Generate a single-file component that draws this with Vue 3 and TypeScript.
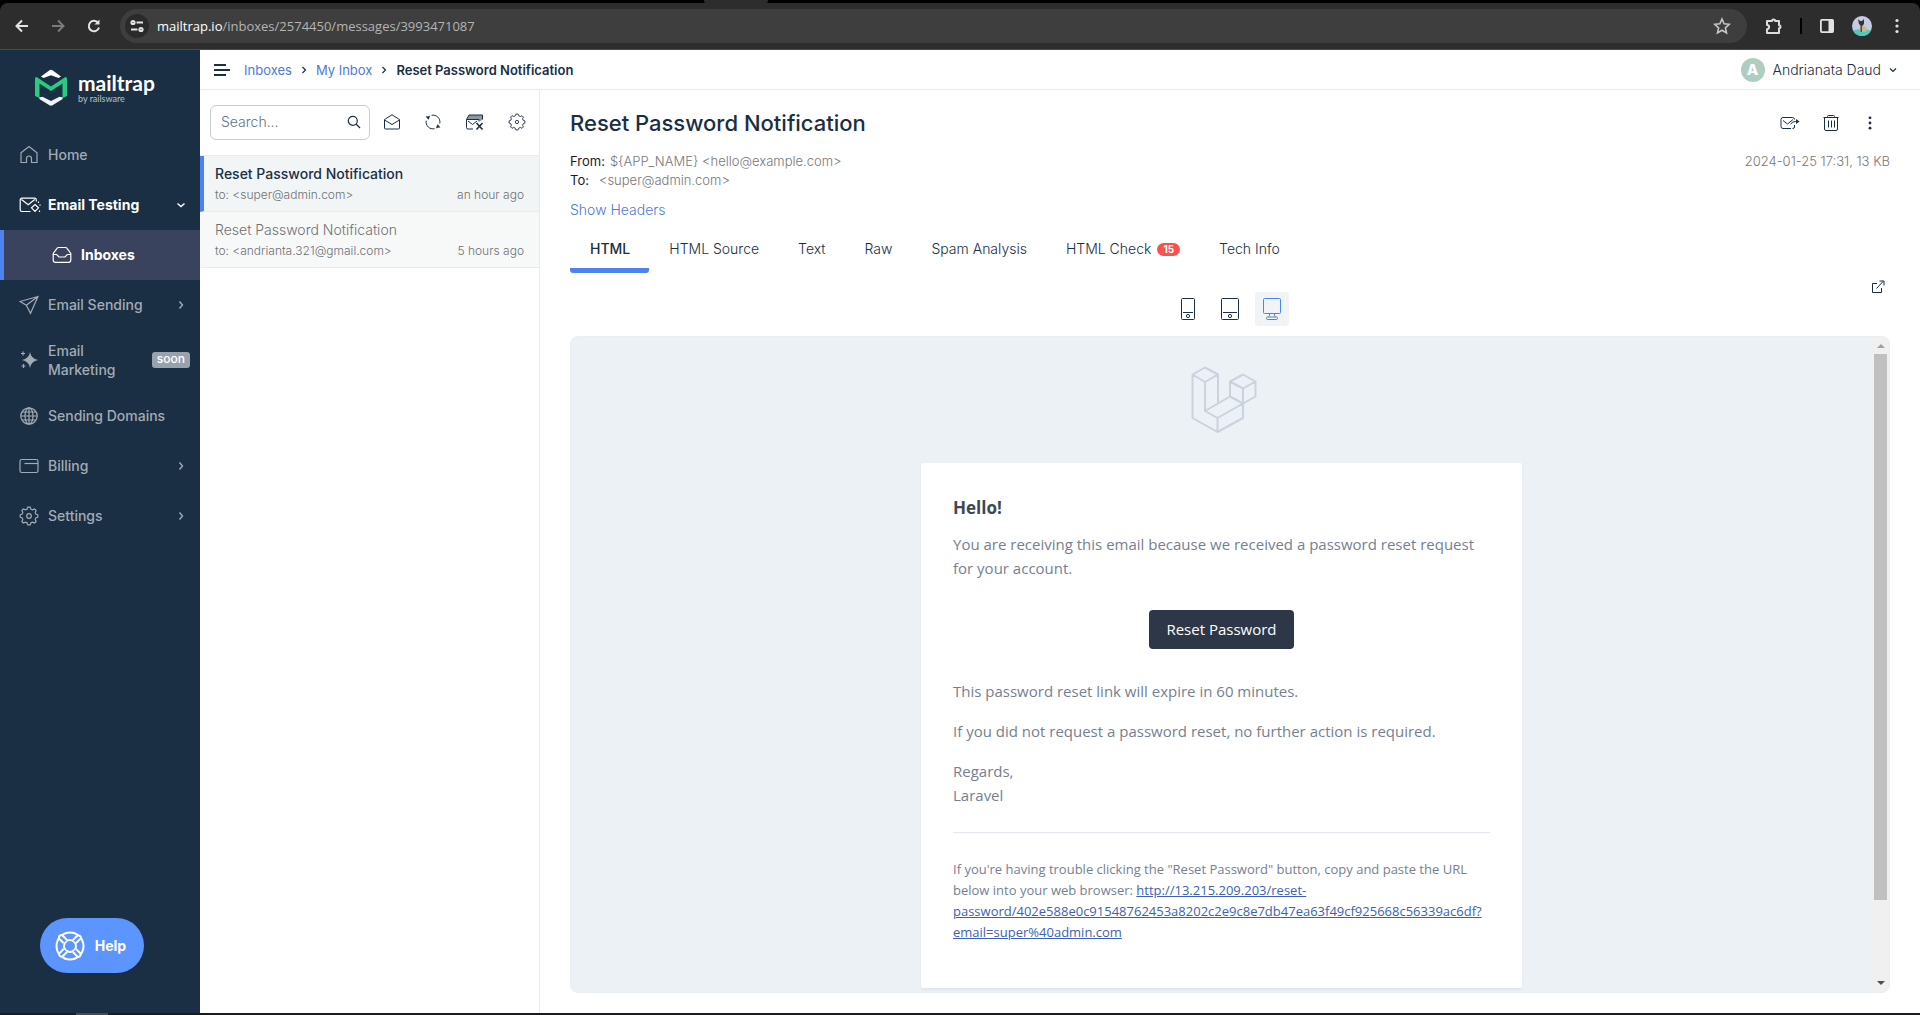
<script setup lang="ts">
import { ref } from 'vue'

interface Message {
  id: number
  subject: string
  to: string
  age: string
}

interface Tab {
  name: string
  badge?: number
}

const messages: Message[] = [
  { id: 3993471087, subject: 'Reset Password Notification', to: '<super@admin.com>', age: 'an hour ago' },
  { id: 3992760412, subject: 'Reset Password Notification', to: '<andrianta.321@gmail.com>', age: '5 hours ago' },
]

const tabs: Tab[] = [
  { name: 'HTML' },
  { name: 'HTML Source' },
  { name: 'Text' },
  { name: 'Raw' },
  { name: 'Spam Analysis' },
  { name: 'HTML Check', badge: 15 },
  { name: 'Tech Info' },
]

const selectedMessage = ref(3993471087)
const activeTab = ref('HTML')
const device = ref('desktop')
const search = ref('')
const appName = '${APP_NAME} <hello@example.com>'
</script>

<template>
  <div class="window">
    <header class="browser">
      <div class="tabstrip"><span class="tab-foot"></span></div>
      <div class="toolbar">
        <div class="nav-buttons">
          <button aria-label="Back">
            <svg width="16" height="16" viewBox="0 0 16 16" fill="none" stroke="#e3e3e3" stroke-width="2"><path d="M14 8H3M8 2.5 2.5 8 8 13.5" /></svg>
          </button>
          <button aria-label="Forward">
            <svg width="16" height="16" viewBox="0 0 16 16" fill="none" stroke="#7b7b7b" stroke-width="2"><path d="M2 8h11M8 2.5 13.5 8 8 13.5" /></svg>
          </button>
          <button aria-label="Reload">
            <svg width="16" height="16" viewBox="0 0 16 16" fill="none" stroke="#e3e3e3" stroke-width="2"><path d="M13 9.5A5.2 5.2 0 1 1 12.2 5" /><path d="M13.5 1.5v5h-5z" fill="#e3e3e3" stroke="none" /></svg>
          </button>
        </div>
        <div class="address">
          <span class="site-info">
            <svg width="14" height="14" viewBox="0 0 14 14" fill="none" stroke="#e3e3e3" stroke-width="2"><circle cx="3" cy="3.5" r="1.6" /><path d="M6.5 3.5H13M1 10.5h6.5" /><circle cx="11" cy="10.5" r="1.6" /></svg>
          </span>
          <span class="url"><b>mailtrap.io</b>/inboxes/2574450/messages/3993471087</span>
          <svg class="star" width="18" height="18" viewBox="0 0 18 18" fill="none" stroke="#c7c7c7" stroke-width="1.6"><path d="m9 2 2.1 4.8 5.2.5-3.9 3.5 1.1 5.1L9 13.200l-4.500 2.700 1.100-5.100L1.700 7.300l5.200-.5z" /></svg>
        </div>
        <div class="extensions">
          <svg width="18" height="18" viewBox="0 0 18 18" fill="none" stroke="#dcdcdc" stroke-width="2"><path d="M2 4h5a1.600 1.600 0 0 1 3.200 0H14v4.200a1.500 1.500 0 0 1 0 3V16H2v-3.800a2.100 2.100 0 0 0 0-4.200z" stroke-linejoin="round" /></svg>
          <span class="divider"></span>
          <svg width="16" height="16" viewBox="0 0 16 16"><rect x="1.900" y="1.900" width="12.200" height="12.200" rx="1" fill="none" stroke="#e3e3e3" stroke-width="1.800" /><path d="M9.500 1.500H14v13H9.500z" fill="#e3e3e3" /></svg>
          <svg class="profile" width="20" height="20" viewBox="0 0 20 20"><circle cx="10" cy="10" r="10" fill="#c3cbe6" /><path d="M1 14.500q9-3 18 0A10 10 0 0 1 1 14.500z" fill="#4fc9bd" /><path d="M8 9h3l4 3.500-1 3.500H8z" fill="#c9b58c" /><path d="M6 3l2 2h2l2-2v5L9.500 10.500 7 8z" fill="#3d3030" /><path d="M8.500 9.500h1.500V16H8.500z" fill="#5a4a3c" /></svg>
          <svg width="4" height="16" viewBox="0 0 4 16" fill="#e3e3e3"><circle cx="2" cy="2.500" r="1.600" /><circle cx="2" cy="8" r="1.600" /><circle cx="2" cy="13.500" r="1.600" /></svg>
        </div>
      </div>
    </header>

    <div class="app">
      <aside class="sidebar">
        <a class="brand" href="#">
          <svg width="34" height="38" viewBox="0 0 34 38">
            <path d="M7 8.500 15.500 2.200q1.500-1 3 0L27 8.500 24.500 10 17 7.200 9.500 10z" fill="#fff" />
            <path d="M1 28V11q0-3 2.700-1.300L17 18.500l13.300-8.800Q33 8 33 11v17l-4.500 2V15.500L17 23 5.500 15.500V30z" fill="#28cc80" />
            <path d="m5 29.500 3.500-.8L17 33l8.500-4.300 3.500.8-.7 1.800-9.800 6q-1.500.8-3 0l-9.800-6z" fill="#eef3f7" />
          </svg>
          <span class="brand-text"><strong>mailtrap</strong><small>by railsware</small></span>
        </a>
        <nav>
          <a href="#" class="nav-item">
            <svg width="20" height="20" viewBox="0 0 20 20"><path d="M2 7.800 10 1.500l8 6.300V17.500h-5.500v-4a2.500 2.500 0 0 0-5 0v4H2z" /></svg>
            <span>Home</span>
          </a>
          <a href="#" class="nav-item open">
            <svg class="wide" width="22" height="20" viewBox="0 0 22 20"><path d="M11.500 16.500H3A1.800 1.800 0 0 1 1.200 14.700V5A1.800 1.800 0 0 1 3 3.200h12.500A1.800 1.800 0 0 1 17.300 5v1.500" /><path d="m2.500 4.500 6.700 5.300 6.500-5.300M16 9.500l3.500 3.300L16 16.500l-3.500-3.700zM19.500 6.500v1.500M21 9.500v1.200M20.500 15.500v1.500" /></svg>
            <span>Email Testing</span>
            <svg class="chev" width="10" height="10" viewBox="0 0 10 10"><path d="m1.500 3.500 3.500 3 3.500-3" /></svg>
          </a>
          <a href="#" class="nav-item sub active">
            <svg width="20" height="20" viewBox="0 0 20 20"><path d="M1.200 8.500 5 3.300Q5.500 2.500 6.500 2.500h7q1 0 1.500.8l3.800 5.200V15q0 2.300-2.300 2.300h-13Q1.200 17.300 1.200 15zM1.200 9.500h3.500L7 12h6l2.300-2.500h3.500" /></svg>
            <span>Inboxes</span>
          </a>
          <a href="#" class="nav-item">
            <svg width="20" height="20" viewBox="0 0 20 20"><path d="M19 1.500 1 6.500l6.300 3.700L11.500 18.300zM19 1.500 7.300 10.200" /></svg>
            <span>Email Sending</span>
            <svg class="chev" width="10" height="10" viewBox="0 0 10 10"><path d="m3.500 1.500 3 3.500-3 3.500" /></svg>
          </a>
          <a href="#" class="nav-item tall">
            <svg width="20" height="20" viewBox="0 0 20 20"><path class="solid" d="M11 2q1 6.700 8 8-7 1.300-8 8-1-6.700-8-8 7-1.300 8-8z" /><path d="M4 1.500v4M2 3.500h4M4.500 14v4M2.500 16h4" /></svg>
            <span>Email<br />Marketing</span>
            <em class="soon">soon</em>
          </a>
          <a href="#" class="nav-item">
            <svg width="20" height="20" viewBox="0 0 20 20"><circle cx="10" cy="10" r="8.200" /><ellipse cx="10" cy="10" rx="4" ry="8.200" /><path d="M10 1.800v16.400M1.800 10h16.400M3 6h14M3 14h14" /></svg>
            <span>Sending Domains</span>
          </a>
          <a href="#" class="nav-item">
            <svg width="20" height="20" viewBox="0 0 20 20"><rect x="1" y="3.500" width="18" height="13" rx="1.800" /><path d="M5.500 7.500H19" /></svg>
            <span>Billing</span>
            <svg class="chev" width="10" height="10" viewBox="0 0 10 10"><path d="m3.500 1.500 3 3.500-3 3.500" /></svg>
          </a>
          <a href="#" class="nav-item">
            <svg width="20" height="20" viewBox="0 0 20 20"><path d="M8 3.200 8.800 1.200h2.400L12 3.200l1.600.7 2-.9 1.500 1.500-.9 2 .6 1.500 2 .8v2.400l-2 .8-.6 1.500.9 2-1.500 1.500-2-.9-1.600.7-.8 2H8.800L8 16.800l-1.600-.7-2 .9-1.500-1.500.9-2L3.200 12l-2-.8V8.800l2-.8.6-1.500-.9-2L4.400 3l2 .9z" /><circle cx="10" cy="10" r="2.300" /></svg>
            <span>Settings</span>
            <svg class="chev" width="10" height="10" viewBox="0 0 10 10"><path d="m3.500 1.500 3 3.500-3 3.500" /></svg>
          </a>
        </nav>
        <button class="help">
          <svg width="30" height="30" viewBox="0 0 30 30" fill="none" stroke="#fff" stroke-width="2"><circle cx="15" cy="15" r="13.500" /><circle cx="15" cy="15" r="6" /><path d="m8.500 12-4.500-4.500q-.5-2.500 1.500-3.300 1.300-.5 2 .3L12 9M18 9l4.500-4.500q2.500-.5 3.300 1.500.3 1-.3 1.700L21 12M21 18l4.500 4.500q.5 2.500-1.500 3.300-1 .4-1.700-.3L18 21M12 21l-4.500 4.500Q5 26 4.200 24q-.3-1 .3-1.700L8.500 18" fill="#5c95ff" /></svg>
          <span>Help</span>
        </button>
      </aside>

      <div class="content">
        <div class="topbar">
          <button class="burger" aria-label="Toggle menu">
            <svg width="17" height="14" viewBox="0 0 17 14" stroke="#1a2e44" stroke-width="2"><path d="M0 2h12M0 7h16M0 12h12" /></svg>
          </button>
          <nav class="crumbs" aria-label="Breadcrumb">
            <a href="#">Inboxes</a>
            <svg width="6" height="8" viewBox="0 0 6 8"><path d="m1.500 1 3 3-3 3" /></svg>
            <a href="#">My Inbox</a>
            <svg width="6" height="8" viewBox="0 0 6 8"><path d="m1.500 1 3 3-3 3" /></svg>
            <b>Reset Password Notification</b>
          </nav>
          <button class="user">
            <span class="avatar">A</span>
            <span>Andrianata Daud</span>
            <svg width="8" height="8" viewBox="0 0 8 8" fill="none" stroke="#1a2e44" stroke-width="1.200"><path d="m1 2.500 3 3 3-3" /></svg>
          </button>
        </div>

        <div class="panes">
          <section class="list">
            <div class="list-tools">
              <label class="search">
                <input v-model="search" type="text" placeholder="Search..." aria-label="Search" />
                <svg width="14" height="14" viewBox="0 0 14 14"><circle cx="5.800" cy="5.800" r="4.500" /><path d="m9 9 4 4" /></svg>
              </label>
              <div class="list-actions">
                <button aria-label="Mark all as read">
                  <svg width="18" height="18" viewBox="0 0 18 18"><path d="M1.500 6.500 9 1.800l7.500 4.700V15q0 1-1 1h-13q-1 0-1-1zM1.500 7 9 11.500 16.500 7" /></svg>
                </button>
                <button aria-label="Refresh">
                  <svg width="18" height="18" viewBox="0 0 18 18"><path d="M7.500 2.300a6.900 6.900 0 0 1 8.300 8M10.500 15.700a6.900 6.900 0 0 1-8.300-8M3.500 5a7 7 0 0 1 2-2M14.500 13a7 7 0 0 1-2 2" /><path class="ink" d="m1.500 3.500 4.500-.3-1.500 3.600zM16.500 14.500l-4.500.3 1.500-3.600z" /></svg>
                </button>
                <button aria-label="Clean inbox">
                  <svg width="20" height="18" viewBox="0 0 20 18"><path class="haze" d="M4 2h13.500v4.500L15 8.500l-1-2H2z" /><path d="M8 16H3q-1.500 0-1.500-1.500V6.500L4 2h13.500v4.500M1.500 6.500H14v2M3 8l4.500 3.500L12 8" /><path class="thick" d="m11.500 10 6 6.500m0-6.500-6 6.500" /></svg>
                </button>
                <button aria-label="Inbox settings">
                  <svg width="18" height="18" viewBox="0 0 20 20"><path d="M8 3.200 8.800 1.200h2.400L12 3.200l1.600.7 2-.9 1.500 1.500-.9 2 .6 1.500 2 .8v2.400l-2 .8-.6 1.500.9 2-1.500 1.500-2-.9-1.600.7-.8 2H8.800L8 16.800l-1.600-.7-2 .9-1.500-1.500.9-2L3.200 12l-2-.8V8.800l2-.8.6-1.500-.9-2L4.400 3l2 .9z" /><circle cx="10" cy="10" r="1.800" /></svg>
                </button>
              </div>
            </div>
            <a
              v-for="m in messages"
              :key="m.id"
              href="#"
              class="message"
              :class="{ selected: m.id === selectedMessage }"
              @click.prevent="selectedMessage = m.id"
            >
              <span class="subject">{{ m.subject }}</span>
              <span class="meta"><span>to: {{ m.to }}</span><span>{{ m.age }}</span></span>
            </a>
          </section>

          <main class="viewer">
            <div class="title-row">
              <h1>Reset Password Notification</h1>
              <div class="actions">
                <button aria-label="Forward message">
                  <svg width="20" height="14" viewBox="0 0 20 14"><path d="M11 12.500H3q-2 0-2-2v-7q0-2 2-2h9.500q2 0 2 2M3 4.500l4.500 3.500L13 3.500M14.500 9v2q0 1.500-2 1.500M10.500 8q2-2.500 5-2.500h3" /><path class="ink" d="M16 3 19.500 5.500 16 8z" /></svg>
                </button>
                <button aria-label="Delete message">
                  <svg width="16" height="16" viewBox="0 0 16 16"><path d="M.5 2.500h15M4.500 2.500V1.500q0-1 1-1h5q1 0 1 1v1M1.500 2.500v11.500q0 1.500 1.500 1.500h10q1.500 0 1.500-1.500V2.500M5.500 5.500v7M8.500 5.500v7M11.500 5.500v7" /></svg>
                </button>
                <button aria-label="More">
                  <svg width="16" height="14" viewBox="0 0 16 14"><g class="ink"><circle cx="8" cy="1.800" r="1.400" /><circle cx="8" cy="7" r="1.400" /><circle cx="8" cy="12.200" r="1.400" /></g></svg>
                </button>
              </div>
            </div>
            <div class="details">
              <dl>
                <div><dt>From:</dt><dd>{{ appName }}</dd></div>
                <div><dt>To:</dt><dd class="to">&lt;super@admin.com&gt;</dd></div>
              </dl>
              <span class="date">2024-01-25 17:31, 13 KB</span>
            </div>
            <a href="#" class="headers-link">Show Headers</a>

            <div class="tabs" role="tablist">
              <button
                v-for="t in tabs"
                :key="t.name"
                role="tab"
                :aria-selected="t.name === activeTab"
                :class="{ current: t.name === activeTab }"
                @click="activeTab = t.name"
              >
                {{ t.name }}<span v-if="t.badge" class="badge">{{ t.badge }}</span>
              </button>
            </div>

            <div class="preview-tools">
              <div class="devices">
                <button aria-label="Mobile" :class="{ on: device === 'mobile' }" @click="device = 'mobile'">
                  <svg width="14" height="22" viewBox="0 0 14 22"><rect x=".5" y=".5" width="13" height="21" rx="1" /><path d="M2 14.500h10" /><circle cx="7" cy="18" r="1.600" /></svg>
                </button>
                <button aria-label="Tablet" :class="{ on: device === 'tablet' }" @click="device = 'tablet'">
                  <svg width="18" height="22" viewBox="0 0 18 22"><rect x=".5" y=".5" width="17" height="21" rx="1" /><path d="M2 14.500h14" /><circle cx="9" cy="18" r="1.600" /></svg>
                </button>
                <button aria-label="Desktop" :class="{ on: device === 'desktop' }" @click="device = 'desktop'">
                  <svg width="18" height="22" viewBox="0 0 18 22"><rect x=".5" y=".5" width="17" height="15" rx="1" /><path d="M6.500 15.500v2l-1 1.500M11.500 15.500v2l1 1.500" /><rect x="3.500" y="19" width="11" height="2.500" rx="1" /></svg>
                </button>
              </div>
              <a href="#" class="external" aria-label="Open in new tab">
                <svg width="14" height="14" viewBox="0 0 14 14"><path d="M6 3.500H1.500v9h9V8M5.500 8.500l6.500-7M8.500 1H13v4.500" /></svg>
              </a>
            </div>

            <div class="frame">
              <div class="mail">
                <svg class="laravel" width="66" height="67" viewBox="0 0 66 67" fill="none" stroke="#cbd2df" stroke-width="2" stroke-linejoin="round">
                  <path d="M1.500 8.500 14 1.500l13 7v28M1.500 8.500 14 16l13-7.500M14 16v29l12.500 7 25.500-14.500M1.500 8.500V52l25 14 25.500-14V37.500L39 30.500 14 45M26.500 52v14M39 30.500v-15L52 8.500l12.500 7v15L52 37.500 39 30.500M39 15.500l13 7 12.500-7M52 22.500v15" />
                </svg>
                <article class="card">
                  <h2>Hello!</h2>
                  <p>You are receiving this email because we received a password reset request for your account.</p>
                  <div class="cta"><a href="#">Reset Password</a></div>
                  <p>This password reset link will expire in 60 minutes.</p>
                  <p>If you did not request a password reset, no further action is required.</p>
                  <p>Regards,<br />Laravel</p>
                  <p class="subcopy">
                    If you're having trouble clicking the "Reset Password" button, copy and paste the URL below into your web browser:
                    <a href="#">http://13.215.209.203/reset-password/402e588e0c91548762453a8202c2e9c8e7db47ea63f49cf925668c56339ac6df?email=super%40admin.com</a>
                  </p>
                </article>
              </div>
              <div class="scroll">
                <svg width="8" height="4" viewBox="0 0 8 4"><path d="M4 0l4 4H0z" fill="#a0a0a0" /></svg>
                <div class="track"><div class="thumb"></div></div>
                <svg width="8" height="4" viewBox="0 0 8 4"><path d="M0 0h8L4 4z" fill="#4d4d4d" /></svg>
              </div>
            </div>
          </main>
        </div>
      </div>
    </div>
    <div class="taskbar"></div>
  </div>
</template>

<style>
body {
  margin: 0;
}
</style>

<style scoped>
.window {
  display: flex;
  flex-direction: column;
  min-height: 100vh;
  background: #fff;
  color: #1a2e44;
  font: 14px/20px Inter, "Liberation Sans", sans-serif;
}
.window *,
.window *::before {
  box-sizing: border-box;
}
button {
  display: inline-flex;
  align-items: center;
  justify-content: center;
  margin: 0;
  padding: 0;
  border: 0;
  background: none;
  color: inherit;
  font: inherit;
  cursor: pointer;
}
a {
  text-decoration: none;
  color: #5078de;
}
svg {
  flex: none;
  display: block;
}

/* Browser chrome */
.browser {
  background: #000;
}
.tabstrip {
  display: flex;
  height: 3px;
}
.tab-foot {
  width: 64px;
  margin-left: 704px;
  border-radius: 0 0 2px 2px;
  background: #2d2d2d;
}
.toolbar {
  display: flex;
  align-items: center;
  height: 47px;
  padding: 0 21px 0 14px;
  border-bottom: 1px solid #4a4a4a;
  border-radius: 8px 8px 0 0;
  background: #2d2d2d;
}
.nav-buttons {
  display: flex;
  gap: 20px;
  margin-right: 18px;
}
.address {
  display: flex;
  flex: 1;
  align-items: center;
  height: 34px;
  padding: 0 16px 0 5px;
  border-radius: 17px;
  background: #3e3e3e;
}
.site-info {
  display: grid;
  place-items: center;
  width: 24px;
  height: 24px;
  margin-right: 8px;
  border-radius: 50%;
  background: #2a2a2a;
}
.url {
  flex: 1;
  color: #b4b4b4;
  font: 13px/20px "Open Sans", sans-serif;
}
.url b {
  color: #fff;
  font-weight: 400;
}
.extensions {
  display: flex;
  align-items: center;
  gap: 17px;
  margin-left: 18px;
}
.profile {
  margin-right: 6px;
}
.divider {
  width: 2px;
  height: 16px;
  background: #000;
}

/* Sidebar */
.app {
  display: flex;
  flex: 1;
}
.sidebar {
  display: flex;
  flex-direction: column;
  flex: none;
  width: 200px;
  background: #1a2e44;
}
.brand {
  display: flex;
  gap: 10px;
  height: 80px;
  padding: 18px 0 0 34px;
}
.brand-text {
  display: flex;
  flex-direction: column;
  padding-top: 4px;
}
.brand strong {
  color: #fff;
  font: 700 21px/22px Lato, sans-serif;
}
.brand small {
  color: #b9c2cc;
  font: 9px/9px Lato, sans-serif;
}
.nav-item {
  display: flex;
  align-items: center;
  gap: 9px;
  height: 50px;
  padding: 0 14px 1px 19px;
  color: #a3abb4;
  font-weight: 500;
  line-height: 19px;
}
.nav-item svg {
  fill: none;
  stroke: currentColor;
  stroke-width: 1.200;
}
.nav-item .solid {
  fill: currentColor;
  stroke: none;
}
.nav-item .wide {
  margin-right: -2px;
}
.nav-item .chev {
  margin-left: auto;
  stroke-width: 1.400;
}
.nav-item.tall {
  height: 61px;
  padding-right: 10px;
}
.nav-item.open,
.nav-item.active {
  color: #fff;
  font-weight: 700;
}
.nav-item.sub {
  padding-left: 48px;
  border-left: 4px solid #4c83ee;
  background: #3a435e;
}
.soon {
  margin-left: auto;
  padding: 0 5px 2px;
  border-radius: 3px;
  background: #98a2ad;
  color: #fff;
  font: 500 12px/14px Inter, sans-serif;
}
.help {
  gap: 10px;
  width: 104px;
  height: 55px;
  margin: auto 0 40px 40px;
  border-radius: 28px;
  background: #5c95ff;
  color: #fff;
  font-size: 14px;
  font-weight: 700;
  padding-right: 3px;
}

/* Top bar */
.content {
  display: flex;
  flex-direction: column;
  flex: 1;
  min-width: 0;
}
.topbar {
  display: flex;
  align-items: center;
  height: 40px;
  padding: 0 23px 0 14px;
  border-bottom: 1px solid #e8eaec;
}
.crumbs {
  display: flex;
  align-items: center;
  gap: 9px;
  margin-left: 13px;
  font-size: 13px;
}
.crumbs svg {
  fill: none;
  stroke: #1a2e44;
  stroke-width: 1.200;
}
.crumbs b {
  font-weight: 600;
}
.user {
  gap: 8px;
  margin-left: auto;
  font-weight: 300;
}
.avatar {
  width: 24px;
  height: 24px;
  border-radius: 50%;
  background: #aecfbf;
  color: #fff;
  font-weight: 800;
  font-size: 15px;
  line-height: 24px;
}

/* Message list */
.panes {
  display: flex;
  flex: 1;
}
.list {
  flex: none;
  width: 340px;
  border-right: 1px solid #e8eaec;
  font-weight: 300;
}
.list-tools {
  display: flex;
  align-items: center;
  gap: 13px;
  height: 66px;
  padding: 0 13px 1px 10px;
  border-bottom: 1px solid #e8eaec;
}
.search {
  display: flex;
  align-items: center;
  width: 160px;
  height: 35px;
  padding: 0 8px 0 10px;
  border: 1px solid #c9ccd0;
  border-radius: 6px;
}
.search input {
  flex: 1;
  min-width: 0;
  padding: 0;
  border: 0;
  outline: 0;
  background: none;
  color: inherit;
  font: inherit;
}
.search input::placeholder {
  color: #5f7488;
  opacity: 1;
}
.search svg,
.list-actions svg,
.actions svg,
.external svg {
  fill: none;
  stroke: #1a2e44;
  stroke-width: 1;
}
.search svg {
  stroke-width: 1.200;
}
.list-actions {
  display: flex;
  flex: 1;
  justify-content: space-between;
}
.list-actions .ink,
.actions .ink {
  fill: #1a2e44;
  stroke: none;
}
.list-actions .haze {
  fill: #8d97a3;
  stroke: none;
}
.list-actions .thick {
  stroke-width: 1.600;
}
.message {
  display: flex;
  flex-direction: column;
  gap: 2px;
  height: 56px;
  padding: 8px 15px 0 11px;
  border-bottom: 1px solid #e8eaec;
  border-left: 4px solid transparent;
  background: #f7f9f9;
  color: #6e7174;
}
.message .meta {
  display: flex;
  justify-content: space-between;
  color: #6e7174;
  font-size: 12px;
  line-height: 18px;
}
.message.selected {
  border-left-color: #4c83ee;
  background: #f2f5f6;
}
.message.selected .subject {
  color: #1a2e44;
  font-weight: 500;
}

/* Viewer */
.viewer {
  display: flex;
  flex-direction: column;
  flex: 1;
  min-width: 0;
  padding: 19px 30px 20px;
}
.title-row {
  display: flex;
  align-items: center;
  justify-content: space-between;
  height: 28px;
}
h1 {
  margin: 0;
  font-size: 22px;
  font-weight: 500;
  line-height: 28px;
}
.actions {
  display: flex;
  gap: 23px;
  padding-right: 12px;
}
.details {
  display: flex;
  justify-content: space-between;
  margin-top: 14px;
  color: #777;
  font-size: 13px;
  font-weight: 300;
}
dl,
dd {
  margin: 0;
}
dl div {
  display: flex;
  gap: 5px;
  height: 19px;
}
dt {
  color: #1a1a2e;
  font-weight: 400;
}
dd.to {
  margin-left: 5px;
}
.headers-link {
  align-self: flex-start;
  margin-top: 11px;
  font-weight: 300;
}
.tabs {
  display: flex;
  margin-top: 10px;
  font-weight: 300;
}
.tabs button {
  height: 43px;
  padding: 0 19px 5px 20px;
}
.tabs .current {
  font-weight: 500;
  background: linear-gradient(#4c83ee, #4c83ee) bottom / 100% 5px no-repeat;
  border-radius: 3px;
}
.badge {
  margin-left: 6px;
  padding: 0 6px;
  border-radius: 7px;
  background: #f95050;
  color: #fff;
  font-size: 10px;
  font-weight: 700;
  line-height: 13px;
}
.preview-tools {
  display: grid;
  grid-template-columns: 1fr auto 1fr;
  height: 63px;
}
.devices {
  display: flex;
  grid-column: 2;
  align-self: end;
  gap: 8px;
  margin-bottom: 10px;
}
.devices button {
  width: 34px;
  height: 34px;
  border-radius: 4px;
}
.devices svg {
  fill: none;
  stroke: #1a2e44;
}
.devices .on {
  background: #f0f4f6;
}
.devices .on svg {
  stroke: #4c83ee;
}
.external {
  justify-self: end;
  padding: 7px 5px 0 0;
}

/* Rendered mail */
.frame {
  display: flex;
  flex: 1;
  overflow: hidden;
  border: 1px solid #e9eef2;
  border-radius: 8px;
  background: #ecf1f5;
}
.mail {
  display: flex;
  flex: 1;
  flex-direction: column;
  align-items: center;
  padding: 29px 0 4px;
  color: #767f92;
  font: 15px/24px "Open Sans", sans-serif;
}
.laravel {
  margin-right: -5px;
}
.card {
  width: 601px;
  margin-top: 30px;
  padding: 32px 32px 45px;
  border-radius: 2px;
  background: #fff;
  box-shadow: 0 2px 2px #dfe5f0;
}
h2 {
  margin: 0 0 11px;
  color: #3d4852;
  font-size: 17px;
  line-height: 26px;
}
p {
  margin: 0 0 16px;
}
.cta {
  display: flex;
  justify-content: center;
  margin: 30px 0;
}
.cta a {
  padding: 8px 17px;
  border-radius: 4px;
  background: #2d3748;
  color: #fff;
  line-height: 23px;
}
.subcopy {
  margin: 25px 0 0;
  padding-top: 26px;
  border-top: 1px solid #e4e7ee;
  font-size: 13px;
  line-height: 21px;
}
.subcopy a {
  color: #3d5fb8;
  text-decoration: underline;
}
.scroll {
  display: flex;
  flex: none;
  flex-direction: column;
  align-items: center;
  width: 17px;
  padding: 7px 0;
  background: #f0f0f0;
}
.track {
  flex: 1;
  width: 13px;
  padding: 6px 0;
}
.thumb {
  height: 88%;
  background: #c0c0c0;
}
.taskbar {
  height: 2px;
  background: linear-gradient(90deg, #1b1d21 76px, #4a4c50 76px, #4a4c50 108px, #1b1a1c 108px);
}
</style>
